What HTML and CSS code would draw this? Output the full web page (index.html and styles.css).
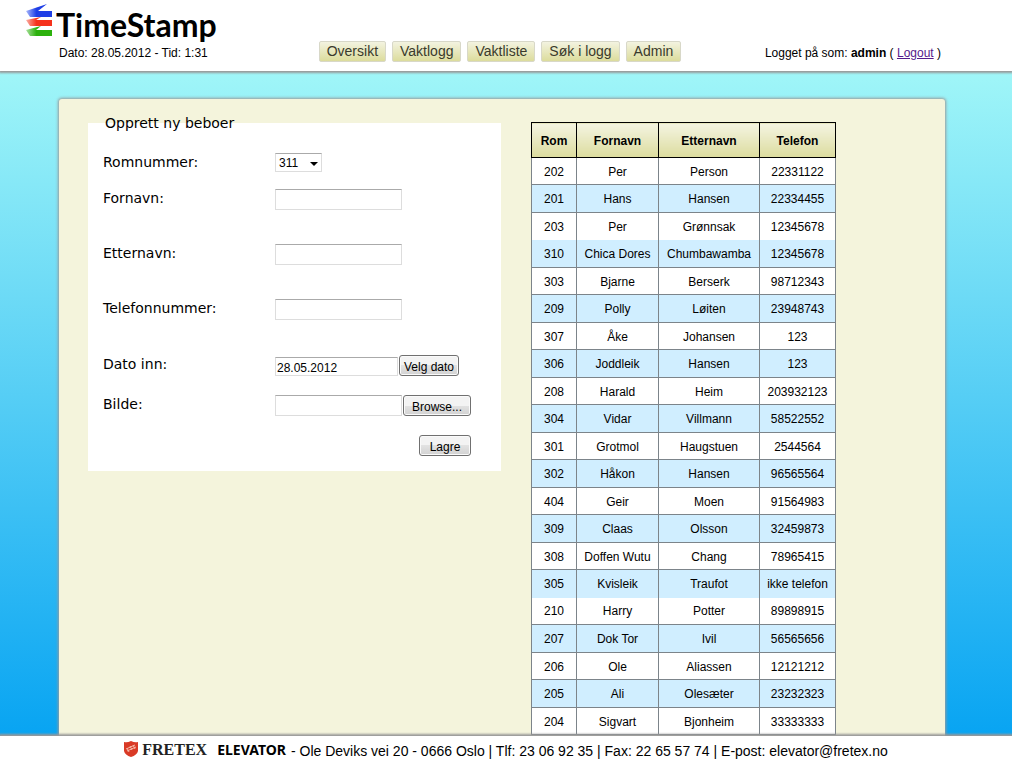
FILE: index.html
```html
<!DOCTYPE html>
<html lang="no">
<head>
<meta charset="utf-8">
<title>TimeStamp</title>
<link rel="stylesheet" href="styles.css">
</head>
<body>
<header class="top">
  <div class="brand">
    <div class="logo">
      <svg class="logo-mark" width="28" height="36" viewBox="0 0 28 36" aria-hidden="true">
        <defs>
          <linearGradient id="blue" x1="0" x2="1"><stop offset="0" stop-color="#a9b8fb"/><stop offset="0.4" stop-color="#1f3fe6"/></linearGradient>
          <linearGradient id="red" x1="0" x2="1"><stop offset="0" stop-color="#fbb0a6"/><stop offset="0.4" stop-color="#f5321c"/></linearGradient>
          <linearGradient id="green" x1="0" x2="1"><stop offset="0" stop-color="#a8e09b"/><stop offset="0.4" stop-color="#2cb10d"/></linearGradient>
        </defs>
        <path d="M22 0 L1 7 L5 13 H27 V7 H13 Z" fill="url(#blue)"/>
        <path d="M16 13 L1 16 L5 22 H27 V16 H11 Z" fill="url(#red)"/>
        <path d="M16 22 L1 26 L5 32 H27 V26 H11 Z" fill="url(#green)"/>
      </svg>
      <span class="logo-text">TimeStamp</span>
    </div>
    <div class="clock">Dato: 28.05.2012 - Tid: 1:31</div>
  </div>
  <nav class="menu">
    <a href="#">Oversikt</a>
    <a href="#">Vaktlogg</a>
    <a href="#">Vaktliste</a>
    <a href="#">Søk i logg</a>
    <a href="#">Admin</a>
  </nav>
  <div class="session">Logget på som: <b>admin</b> ( <a href="#">Logout</a> )</div>
</header>

<main class="stage">
  <div class="panel">
    <form class="form-side">
      <fieldset class="resident">
        <legend>Opprett ny beboer</legend>
        <div class="fields">
          <label for="room">Romnummer:</label>
          <div class="cell"><span class="select"><select id="room"><option>311</option></select></span></div>
          <label for="first">Fornavn:</label>
          <div class="cell"><input id="first" type="text"></div>
          <label for="last">Etternavn:</label>
          <div class="cell"><input id="last" type="text"></div>
          <label for="phone">Telefonnummer:</label>
          <div class="cell"><input id="phone" type="text"></div>
          <label for="date">Dato inn:</label>
          <div class="cell date"><input id="date" type="text" value="28.05.2012"><button type="button">Velg dato</button></div>
          <label for="image">Bilde:</label>
          <div class="cell"><input id="image" type="text"><button class="browse" type="button">Browse...</button></div>
        </div>
        <div class="actions"><button class="save" type="submit">Lagre</button></div>
      </fieldset>
    </form>
    <table class="residents">
      <thead><tr><th class="c-room">Rom</th><th class="c-first">Fornavn</th><th class="c-last">Etternavn</th><th class="c-phone">Telefon</th></tr></thead>
      <tbody>
        <tr><td>202</td><td>Per</td><td>Person</td><td>22331122</td></tr>
        <tr><td>201</td><td>Hans</td><td>Hansen</td><td>22334455</td></tr>
        <tr class="joined"><td>203</td><td>Per</td><td>Grønnsak</td><td>12345678</td></tr>
        <tr><td>310</td><td>Chica Dores</td><td>Chumbawamba</td><td>12345678</td></tr>
        <tr><td>303</td><td>Bjarne</td><td>Berserk</td><td>98712343</td></tr>
        <tr><td>209</td><td>Polly</td><td>Løiten</td><td>23948743</td></tr>
        <tr><td>307</td><td>Åke</td><td>Johansen</td><td>123</td></tr>
        <tr><td>306</td><td>Joddleik</td><td>Hansen</td><td>123</td></tr>
        <tr><td>208</td><td>Harald</td><td>Heim</td><td>203932123</td></tr>
        <tr><td>304</td><td>Vidar</td><td>Villmann</td><td>58522552</td></tr>
        <tr><td>301</td><td>Grotmol</td><td>Haugstuen</td><td>2544564</td></tr>
        <tr><td>302</td><td>Håkon</td><td>Hansen</td><td>96565564</td></tr>
        <tr><td>404</td><td>Geir</td><td>Moen</td><td>91564983</td></tr>
        <tr><td>309</td><td>Claas</td><td>Olsson</td><td>32459873</td></tr>
        <tr><td>308</td><td>Doffen Wutu</td><td>Chang</td><td>78965415</td></tr>
        <tr class="joined"><td>305</td><td>Kvisleik</td><td>Traufot</td><td>ikke telefon</td></tr>
        <tr><td>210</td><td>Harry</td><td>Potter</td><td>89898915</td></tr>
        <tr><td>207</td><td>Dok Tor</td><td>Ivil</td><td>56565656</td></tr>
        <tr><td>206</td><td>Ole</td><td>Aliassen</td><td>12121212</td></tr>
        <tr><td>205</td><td>Ali</td><td>Olesæter</td><td>23232323</td></tr>
        <tr><td>204</td><td>Sigvart</td><td>Bjonheim</td><td>33333333</td></tr>
      </tbody>
    </table>
  </div>
</main>

<footer class="foot">
  <svg class="shield" width="14" height="16" viewBox="0 0 14 16" aria-hidden="true">
    <path d="M0 1 Q3 2 7 0 Q11 2 14 1 V10 Q13 14 7 16 Q1 14 0 10 Z" fill="#d93a26"/>
    <path d="M2 8 L11 4 M3 10 L12 6 M3 7 L5 11 M6 5 L8 9 M9 4 L11 8" stroke="#f6b9a8" stroke-width="1" fill="none"/>
  </svg>
  <span class="fretex">FRETEX</span>
  <span class="elevator">ELEVATOR</span>
  <span class="address">- Ole Deviks vei 20 - 0666 Oslo | Tlf: 23 06 92 35 | Fax: 22 65 57 74 | E-post: elevator@fretex.no</span>
</footer>
</body>
</html>
```

FILE: styles.css
```css
* { box-sizing: border-box; }

body {
  margin: 0;
  min-height: 100vh;
  display: flex;
  flex-direction: column;
  font-family: "Liberation Sans", Arial, sans-serif;
  font-size: 12px;
  color: #000;
  background: #fff;
}

.top {
  position: relative;
  z-index: 1;
  display: grid;
  grid-template-columns: 1fr auto 1fr;
  align-items: end;
  padding: 4px 71px 9px 59px;
  background: #fff;
  box-shadow: 0 1px 2px 1px #999;
}

.logo {
  display: flex;
  gap: 3px;
  margin-left: -34px;
  height: 40px;
}

.logo-text {
  font: bold 32px/42px Lato, sans-serif;
}

.clock, .session {
  line-height: 18px;
}

.session { text-align: right; }
.session a { color: #551a8b; }

.menu {
  display: flex;
  gap: 6px;
}

.menu a {
  padding: 0 7px;
  border: 1px solid #d8d8c8;
  border-radius: 2px;
  background: linear-gradient(#f3f3e0, #dcdc9c);
  color: #3a3a2c;
  font-size: 14px;
  line-height: 19px;
  text-decoration: none;
}

.stage {
  flex: 1;
  display: flex;
  padding: 28px 68px 0 59px;
  background: linear-gradient(#a0f6f8, #08a4f2);
}

.panel {
  flex: 1;
  display: flex;
  align-items: flex-start;
  gap: 30px;
  padding: 15px 109px 0 29px;
  background: #f4f4dc;
  border-radius: 3px 3px 0 0;
  box-shadow: 0 0 3px 1px #999;
}

.form-side { flex: 1; }

.resident {
  margin: 0;
  padding: 21px 30px 15px 15px;
  border: 0;
  background: #fff;
  font: 14px/18px "DejaVu Sans", Verdana, sans-serif;
}

.resident legend { padding: 0 2px; }

.fields {
  display: grid;
  grid-template-columns: 172px 1fr;
  grid-template-rows: 36px 55px 55px 56px 40px 40px;
  align-items: start;
}

.cell {
  display: flex;
  gap: 1px;
}

.date { align-items: flex-end; }

input, select, button {
  font: 12px "Liberation Sans", Arial, sans-serif;
  color: #000;
}

input {
  width: 127px;
  height: 21px;
  padding: 1px;
  border: 1px solid #ddd;
  border-top-color: #aaa;
  background: #fff;
}

.date input {
  width: 123px;
  height: 19px;
  padding-top: 3px;
}

.select { position: relative; }

.select::after {
  content: "";
  position: absolute;
  right: 4px;
  top: 9px;
  border: 4px solid transparent;
  border-top-color: #000;
  border-bottom: 0;
  pointer-events: none;
}

select {
  display: block;
  appearance: none;
  width: 47px;
  height: 19px;
  padding: 1px 3px 0;
  border: 1px solid #ddd;
  border-top-color: #aaa;
  border-radius: 0;
  background: #fff;
}

button {
  height: 21px;
  padding: 2px 4px 0;
  border: 1px solid #707070;
  border-radius: 3px;
  background: linear-gradient(#f3f3f3 50%, #e2e2e2 50%, #d2d2d2);
  box-shadow: inset 0 0 0 1px #fafafa;
  white-space: nowrap;
}

.browse { width: 68px; }
.save { width: 52px; }

.actions {
  display: flex;
  justify-content: flex-end;
}

.residents {
  margin-top: 8px;
  border-collapse: collapse;
  table-layout: fixed;
  width: 304px;
  text-align: center;
  background: #fff;
}

.c-room { width: 45px; }
.c-first { width: 82px; }
.c-last { width: 101px; }
.c-phone { width: 76px; }

th {
  height: 35px;
  padding: 1px 0 0;
  border: 1px solid #000;
  background: linear-gradient(#f4f4e2, #dcdc9e);
}

td {
  height: 27px;
  padding: 1px 0 0;
  border: 1px solid #7c848a;
  white-space: nowrap;
}

tbody tr:nth-child(even) { background: #d0eeff; }
tbody tr:nth-child(even) td { height: 28px; }
tbody .joined td { border-bottom-style: hidden; }

.foot {
  position: relative;
  display: flex;
  align-items: center;
  justify-content: center;
  height: 27px;
  padding-top: 2px;
  background: #fff;
  box-shadow: 0 -1px 2px 1px #999;
  font-size: 14px;
  white-space: nowrap;
}

.shield { margin-bottom: 4px; }

.fretex {
  margin: 0 10px 0 4px;
  padding-bottom: 2px;
  font: bold 16px "Liberation Serif", serif;
  color: #222;
}

.elevator {
  margin-right: 5px;
  padding-bottom: 2px;
  font: bold 14px "Noto Sans", sans-serif;
}
```
